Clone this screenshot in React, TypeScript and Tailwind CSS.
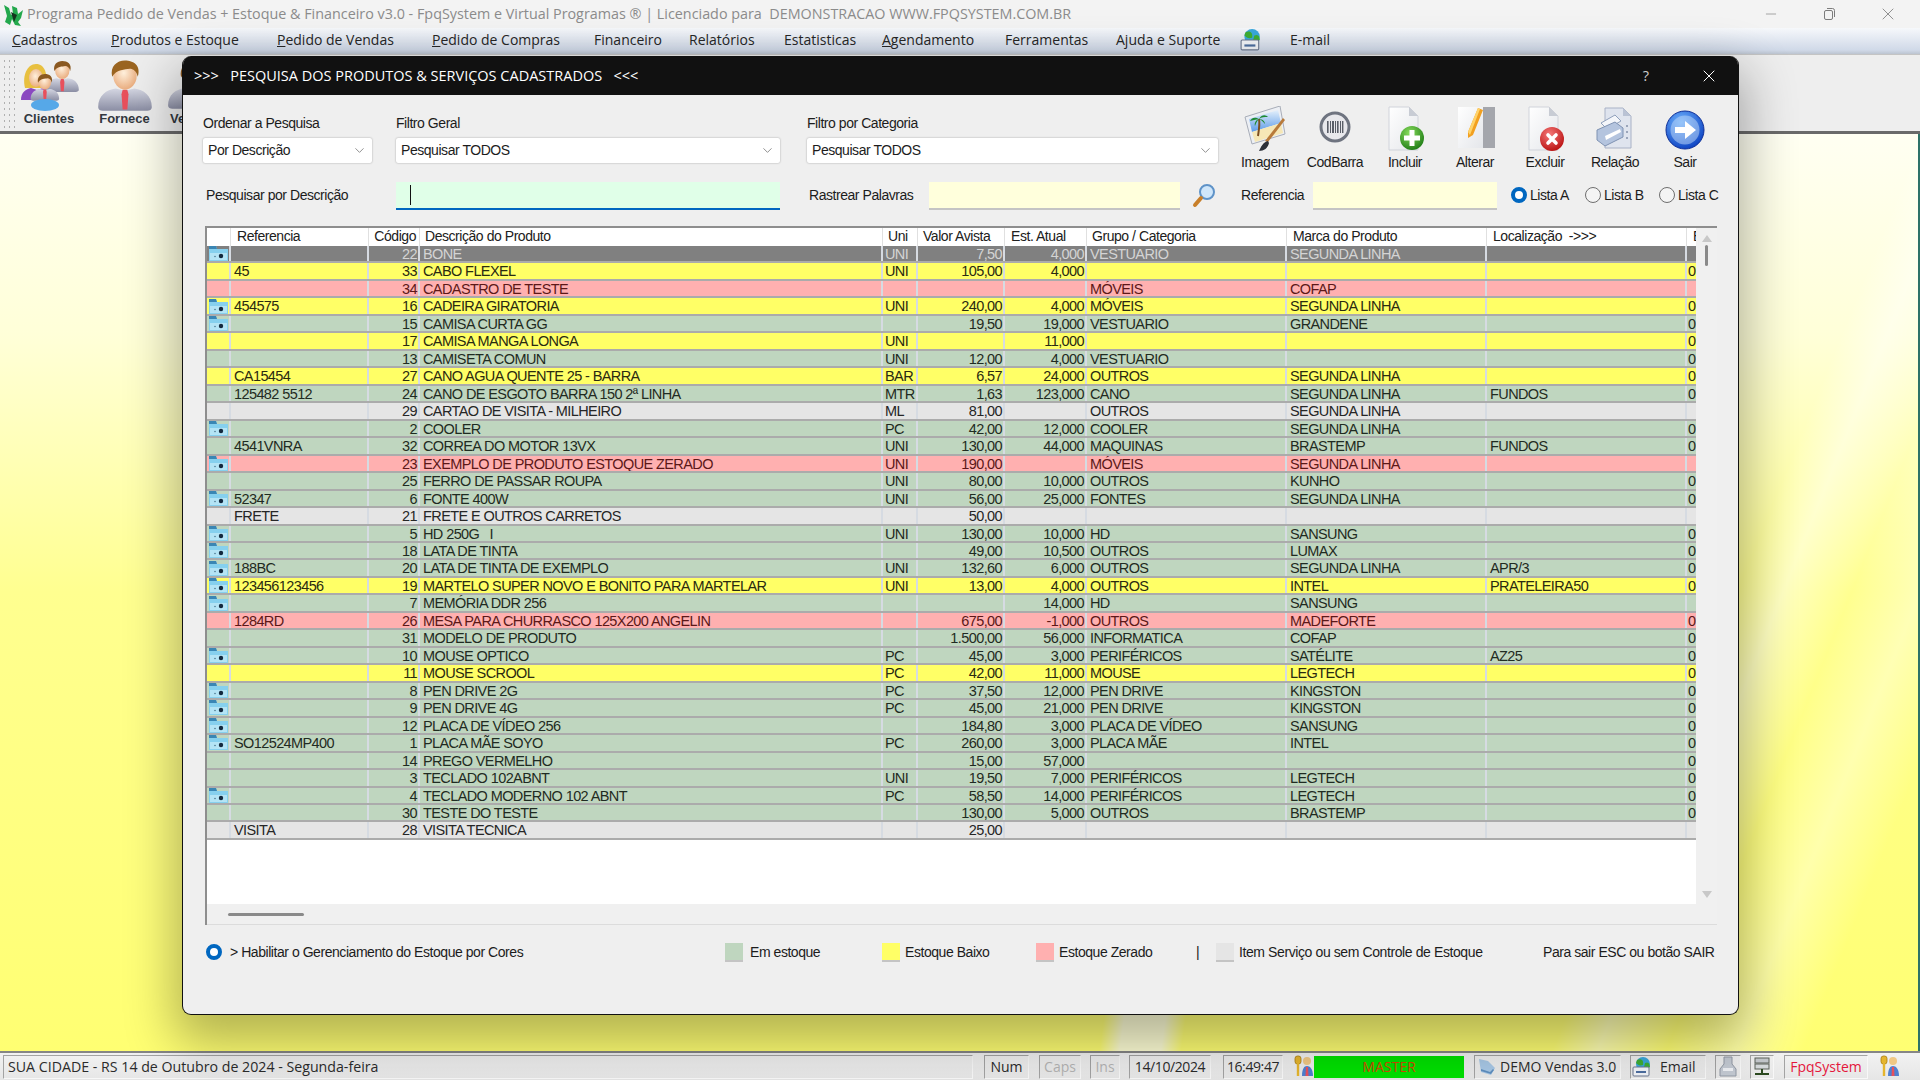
import React from "react";
import { ChevronDown, Minus, X } from "lucide-react";

const MENU = [
  { u: "C", t: "adastros", w: "w-[99px]" },
  { u: "P", t: "rodutos e Estoque", w: "w-[166px]" },
  { u: "P", t: "edido de Vendas", w: "w-[155px]" },
  { u: "P", t: "edido de Compras", w: "w-[162px]" },
  { u: "", t: "Financeiro", w: "w-[95px]" },
  { u: "", t: "Relatórios", w: "w-[95px]" },
  { u: "", t: "Estatisticas", w: "w-[98px]" },
  { u: "A", t: "gendamento", w: "w-[123px]" },
  { u: "", t: "Ferramentas", w: "w-[111px]" },
  { u: "", t: "Ajuda e Suporte", w: "w-[124px]" },
];

const GRID =
  "grid grid-cols-[24px_138px_51px_463px_35px_87px_82px_200px_200px_200px_9px]";

const KINDS: Record<string, string> = {
  s: "bg-[#808080] text-[#d4d4d4]",
  y: "bg-[#ffff66] text-[#2a2a10]",
  r: "bg-[#ffb0b0] text-[#5c1818]",
  g: "bg-[#bfd6bf] text-[#1f2b22]",
  n: "bg-[#e5e5e5] text-[#262626]",
};

// kind|foto|referencia|codigo|descricao|uni|valor|estoque|grupo|marca|local|e
const ROWS = [
  "s|1||22|BONE|UNI|7,50|4,000|VESTUARIO|SEGUNDA LINHA||",
  "y|0|45|33|CABO FLEXEL|UNI|105,00|4,000||||0",
  "r|0||34|CADASTRO DE TESTE||||MÓVEIS|COFAP||",
  "y|1|454575|16|CADEIRA GIRATORIA|UNI|240,00|4,000|MÓVEIS|SEGUNDA LINHA||0",
  "g|1||15|CAMISA CURTA GG||19,50|19,000|VESTUARIO|GRANDENE||0",
  "y|0||17|CAMISA MANGA LONGA|UNI||11,000||||0",
  "g|0||13|CAMISETA COMUN|UNI|12,00|4,000|VESTUARIO|||0",
  "y|0|CA15454|27|CANO AGUA QUENTE 25 - BARRA|BAR|6,57|24,000|OUTROS|SEGUNDA LINHA||0",
  "g|0|125482 5512|24|CANO DE ESGOTO BARRA 150 2ª LINHA|MTR|1,63|123,000|CANO|SEGUNDA LINHA|FUNDOS|0",
  "n|0||29|CARTAO DE VISITA - MILHEIRO|ML|81,00||OUTROS|SEGUNDA LINHA||",
  "g|1||2|COOLER|PC|42,00|12,000|COOLER|SEGUNDA LINHA||0",
  "g|0|4541VNRA|32|CORREA DO MOTOR 13VX|UNI|130,00|44,000|MAQUINAS|BRASTEMP|FUNDOS|0",
  "r|1||23|EXEMPLO DE PRODUTO ESTOQUE ZERADO|UNI|190,00||MÓVEIS|SEGUNDA LINHA||",
  "g|0||25|FERRO DE PASSAR ROUPA|UNI|80,00|10,000|OUTROS|KUNHO||0",
  "g|1|52347|6|FONTE 400W|UNI|56,00|25,000|FONTES|SEGUNDA LINHA||0",
  "n|0|FRETE|21|FRETE E OUTROS CARRETOS||50,00|||||",
  "g|1||5|HD 250G\u00a0\u00a0\u00a0I|UNI|130,00|10,000|HD|SANSUNG||0",
  "g|1||18|LATA DE TINTA||49,00|10,500|OUTROS|LUMAX||0",
  "g|1|188BC|20|LATA DE TINTA DE EXEMPLO|UNI|132,60|6,000|OUTROS|SEGUNDA LINHA|APR/3|0",
  "y|1|123456123456|19|MARTELO SUPER NOVO E BONITO PARA MARTELAR|UNI|13,00|4,000|OUTROS|INTEL|PRATELEIRA50|0",
  "g|1||7|MEMÓRIA DDR 256|||14,000|HD|SANSUNG||",
  "r|0|1284RD|26|MESA PARA CHURRASCO 125X200 ANGELIN||675,00|-1,000|OUTROS|MADEFORTE||0",
  "g|0||31|MODELO DE PRODUTO||1.500,00|56,000|INFORMATICA|COFAP||0",
  "g|1||10|MOUSE OPTICO|PC|45,00|3,000|PERIFÉRICOS|SATÉLITE|AZ25|0",
  "y|0||11|MOUSE SCROOL|PC|42,00|11,000|MOUSE|LEGTECH||0",
  "g|1||8|PEN DRIVE 2G|PC|37,50|12,000|PEN DRIVE|KINGSTON||0",
  "g|1||9|PEN DRIVE 4G|PC|45,00|21,000|PEN DRIVE|KINGSTON||0",
  "g|1||12|PLACA DE VÍDEO 256||184,80|3,000|PLACA DE VÍDEO|SANSUNG||0",
  "g|1|SO12524MP400|1|PLACA MÃE SOYO|PC|260,00|3,000|PLACA MÃE|INTEL||0",
  "g|0||14|PREGO VERMELHO||15,00|57,000||||0",
  "g|0||3|TECLADO 102ABNT|UNI|19,50|7,000|PERIFÉRICOS|LEGTECH||0",
  "g|1||4|TECLADO MODERNO 102 ABNT|PC|58,50|14,000|PERIFÉRICOS|LEGTECH||0",
  "g|0||30|TESTE DO TESTE||130,00|5,000|OUTROS|BRASTEMP||0",
  "n|0|VISITA|28|VISITA TECNICA||25,00|||||",
].map((r) => r.split("|"));

const Defs = () => (
  <svg className="absolute w-0 h-0">
    <defs>
      <radialGradient id="skin" cx="45%" cy="40%" r="65%">
        <stop offset="0" stopColor="#fff0dc" />
        <stop offset="1" stopColor="#e8a878" />
      </radialGradient>
      <linearGradient id="suit" x1="0" y1="0" x2="0" y2="1">
        <stop offset="0" stopColor="#d4d6e2" />
        <stop offset="1" stopColor="#8b8ea4" />
      </linearGradient>
      <radialGradient id="blueBall" cx="40%" cy="30%" r="75%">
        <stop offset="0" stopColor="#6fb5ff" />
        <stop offset="1" stopColor="#0a3fc0" />
      </radialGradient>
      <radialGradient id="greenBall" cx="40%" cy="30%" r="75%">
        <stop offset="0" stopColor="#8ade5e" />
        <stop offset="1" stopColor="#1c7a14" />
      </radialGradient>
      <radialGradient id="redBall" cx="40%" cy="30%" r="75%">
        <stop offset="0" stopColor="#f57878" />
        <stop offset="1" stopColor="#b80f0f" />
      </radialGradient>
      <linearGradient id="sheet" x1="0" y1="0" x2="1" y2="1">
        <stop offset="0" stopColor="#ffffff" />
        <stop offset="1" stopColor="#e4e6ea" />
      </linearGradient>
      <linearGradient id="sky" x1="0" y1="0" x2="0" y2="1">
        <stop offset="0" stopColor="#e4f0fb" />
        <stop offset="1" stopColor="#5d9be8" />
      </linearGradient>
    </defs>
  </svg>
);

const Person = ({ x = 0, y = 0, s = 1, hair = "#9a6420" }: { x?: number; y?: number; s?: number; hair?: string }) => (
  <g transform={`translate(${x} ${y}) scale(${s})`}>
    <path d="M1 40c0-10 7-15 15-16l8 2 8-2c8 1 15 6 15 16 0 2-2 3-4 3H5c-2 0-4-1-4-3z" fill="url(#suit)" />
    <path d="M22 25h4l1 4-1 13h-4l-1-13z" fill="#e8505c" />
    <ellipse cx="24" cy="13" rx="10" ry="12" fill="url(#skin)" />
    <path d="M13 14C11 5 17 0 24 0s14 4 11 14c-1-5-4-7-7-7-4 1-11 0-15 7z" fill={hair} />
  </g>
);

const CameraIcon = () => (
  <svg width="19" height="15" viewBox="0 0 19 15" className="shrink-0">
    <path d="M0 0h7l1 3h11v12H0z" fill="#86d0ee" />
    <path d="M0 0h7l1 3H0z" fill="#3a86b4" />
    <rect x="1" y="7" width="17" height="7" fill="#b4e4f5" />
    <circle cx="12" cy="10" r="2.200" fill="#14293e" />
    <circle cx="6" cy="10.500" r="0.800" fill="#4d7890" />
  </svg>
);

const ImagemIcon = () => (
  <svg width="44" height="46" viewBox="0 0 44 46">
    <path d="M2 11 37 0l5 28-33 10z" fill="#eceff4" stroke="#a8adb8" />
    <path d="M6 13 35 4l3 13L9 26z" fill="url(#sky)" />
    <path d="M9 26l29-9 2 10-28 9z" fill="#f6e7b6" />
    <path d="M15 30c1-7 2-12 1-17" stroke="#7a4d20" strokeWidth="2" fill="none" />
    <path d="M16 13c-5-3-8 0-9 2 3-1 5-1 9-2zm0 0c3-5 7-4 9-2-4 0-6 0-9 2zm0 0c-3 1-5 4-4 7 1-3 2-5 4-7zm0 0c4 0 6 3 6 5-2-2-3-4-6-5z" fill="#1e8a34" />
    <path d="M42 14 25 36l-3-1 18-23z" fill="#b87a3a" />
    <path d="M25 35c-5 1-7 6-9 10 5 0 9-3 10-8z" fill="#2c3038" />
  </svg>
);

const CodBarraIcon = () => (
  <svg width="44" height="46" viewBox="0 0 44 46">
    <circle cx="22" cy="21" r="14" fill="#e8e8ec" stroke="#6f7480" strokeWidth="3" />
    <g fill="#5a5e68">
      <rect x="14" y="15" width="1.600" height="12" />
      <rect x="17" y="15" width="1" height="12" />
      <rect x="19" y="15" width="2" height="12" />
      <rect x="22" y="15" width="1" height="12" />
      <rect x="24" y="15" width="1.600" height="12" />
      <rect x="27" y="15" width="1" height="12" />
      <rect x="29" y="15" width="1.400" height="12" />
    </g>
  </svg>
);

const Doc = () => (
  <path d="M6 2h20l9 9v34H6z" fill="url(#sheet)" stroke="#d0d3da" />
);

const IncluirIcon = () => (
  <svg width="44" height="48" viewBox="0 0 44 48">
    <Doc />
    <path d="M26 2v9h9z" fill="#c8ccd4" />
    <circle cx="29" cy="33" r="12" fill="url(#greenBall)" />
    <path d="M26.500 25h5v5.500H37v5h-5.500V41h-5v-5.500H21v-5h5.500z" fill="#fff" />
  </svg>
);

const AlterarIcon = () => (
  <svg width="44" height="48" viewBox="0 0 44 48">
    <rect x="8" y="2" width="34" height="41" fill="#a4a6ac" />
    <path d="M5 2h25v41H5z" fill="url(#sheet)" />
    <path d="M25 3l5 2-10 25-5 3 0-6z" fill="#f2a020" />
    <path d="M25 3l2 1-10 26-2-3z" fill="#ffd36a" />
  </svg>
);

const ExcluirIcon = () => (
  <svg width="44" height="48" viewBox="0 0 44 48">
    <Doc />
    <path d="M26 2v9h9z" fill="#c8ccd4" />
    <circle cx="29" cy="34" r="12" fill="url(#redBall)" />
    <path d="M25 30l8 8m0-8-8 8" stroke="#fff" strokeWidth="3.600" strokeLinecap="round" />
  </svg>
);

const RelacaoIcon = () => (
  <svg width="44" height="48" viewBox="0 0 44 48">
    <path d="M12 3h18l8 8v32H12z" fill="#dfe4ee" stroke="#a9b2c6" />
    <path d="M30 3v8h8z" fill="#b9c2d4" />
    <path d="M8 18l14-8 6 6-14 8z" fill="#f4f6fa" stroke="#8fa0bc" />
    <path d="M4 25l18-8 8 6v9L12 41l-8-6z" fill="#b4c4de" stroke="#7f92b2" />
    <path d="M12 31l15-7 1 3-15 8z" fill="#ffffff" />
    <g fill="#9aa5ba">
      <rect x="33" y="20" width="2" height="2" />
      <rect x="33" y="26" width="2" height="2" />
      <rect x="33" y="32" width="2" height="2" />
    </g>
  </svg>
);

const SairIcon = () => (
  <svg width="44" height="46" viewBox="0 0 44 46">
    <circle cx="22" cy="24" r="19" fill="url(#blueBall)" stroke="#0e2f98" />
    <circle cx="22" cy="24" r="14.500" fill="#b6d2f6" opacity="0.55" />
    <path d="M12 21h10v-6l11 9-11 9v-6H12z" fill="#fff" />
  </svg>
);

const MiniKeys = () => (
  <svg width="20" height="23" viewBox="0 0 20 23">
    <rect x="1" y="1" width="6" height="8" rx="2.500" fill="#e5b52e" stroke="#a87c10" strokeWidth="0.800" />
    <rect x="2.800" y="8" width="2.400" height="13" fill="#e5b52e" />
    <circle cx="13" cy="6" r="4" fill="#f0c884" />
    <path d="M8 21c0-7 2-10 5-10s6 3 6 10z" fill="#4f7fd0" />
    <path d="M12 12h2l.5 9h-3z" fill="#e8505c" />
  </svg>
);

const GlobeSave = ({ size = 20 }: { size?: number }) => (
  <svg width={size} height={size} viewBox="0 0 20 20">
    <circle cx="11" cy="7" r="7" fill="#3aa8dc" />
    <path d="M5 3c4-2 7 0 6 5-3 1-5 0-7-2zM13 6c4-2 5 2 5 4l-4 3-2-3z" fill="#3fae34" />
    <rect x="1" y="10" width="16" height="9" rx="1" fill="#f2f4f8" stroke="#6c7890" />
    <rect x="4" y="14" width="10" height="2" fill="#4d6ea0" />
  </svg>
);

const Panel = ({ className, children }: { className: string; children?: React.ReactNode }) => (
  <div
    className={`h-[24px] flex items-center shrink-0 border border-t-[#a3a3a3] border-l-[#a3a3a3] border-r-[#f8f8f8] border-b-[#f8f8f8] whitespace-nowrap overflow-hidden ${className}`}
  >
    {children}
  </div>
);

const SelectBox = ({ value, className }: { value: string; className: string }) => (
  <div
    className={`h-[25px] bg-white rounded-[2px] shadow-[0_0_2px_rgba(0,0,0,0.35)] flex items-center justify-between pl-[5px] pr-[5px] ${className}`}
  >
    <span>{value}</span>
    <ChevronDown size={15} strokeWidth={1.3} className="text-[#777]" />
  </div>
);

const Radio = ({ on, label, className }: { on?: boolean; label: string; className: string }) => (
  <div className={`flex items-center gap-[3px] pb-[2px] ${className}`}>
    {on ? (
      <span className="w-[16px] h-[16px] rounded-full border-[4px] border-[#0067c0] bg-white shrink-0" />
    ) : (
      <span className="w-[16px] h-[16px] rounded-full border border-[#6e6e6e] bg-[#f4f4f4] shrink-0" />
    )}
    <span>{label}</span>
  </div>
);

const Tool = ({ label, children }: { label: string; children: React.ReactNode }) => (
  <div className="w-[70px] flex flex-col items-center">
    <div className="h-[50px] shrink-0 flex items-center justify-center">{children}</div>
    <span className="h-[16px] leading-[16px] shrink-0">{label}</span>
  </div>
);

const Swatch = ({ className }: { className: string }) => (
  <span className={`w-[18px] h-[19px] border-b-2 border-[#c4c4c4] shrink-0 ${className}`} />
);

export default function App() {
  return (
    <div className="relative w-screen h-screen overflow-hidden flex flex-col font-['Liberation_Sans',sans-serif] text-[#1c1c1c] bg-[#f0f0f0]">
      <Defs />

      {/* barra de titulo */}
      <div className="h-[28px] shrink-0 bg-[#f3f3f3] flex items-center pl-[2px] font-['Open_Sans',sans-serif] text-[#8b8b8b] text-[14.35px]">
        <svg width="22" height="24" viewBox="0 0 22 24" className="shrink-0">
          <path d="M2 3l5 3 2 7 2-1-1-8 5 2 1 6 5-4-2 8-3 4 3 4-6-1-3-6-2 6-5-3 2-6z" fill="#23a84c" />
          <path d="M9 10l6 3-3 7z" fill="#14331e" />
        </svg>
        <span className="ml-[3px] whitespace-pre">Programa Pedido de Vendas + Estoque &amp; Financeiro v3.0 - FpqSystem e Virtual Programas ® | Licenciado para  DEMONSTRACAO WWW.FPQSYSTEM.COM.BR</span>
        <div className="ml-auto mr-[2px] flex items-center text-[#7c7c7c]">
          <span className="w-[58px] flex justify-center"><Minus size={16} strokeWidth={1} /></span>
          <span className="w-[58px] flex justify-center">
            <svg width="13" height="14" viewBox="0 0 13 14" fill="none" stroke="currentColor"><rect x="1.500" y="3.500" width="8" height="9" rx="1.500" /><path d="M4 1.500h5.500a2 2 0 0 1 2 2V10" /></svg>
          </span>
          <span className="w-[60px] flex justify-center"><X size={20} strokeWidth={1} /></span>
        </div>
      </div>

      {/* menu */}
      <div className="h-[26px] shrink-0 flex items-center pl-[12px] pb-[3px] text-[14px] text-[#262626] font-['Open_Sans',sans-serif] bg-[linear-gradient(180deg,#f6f8fb,#d0d9e8_85%,#bcc4d0)]">
        {MENU.map((m, i) => (
          <span key={i} className={`${m.w} shrink-0 whitespace-nowrap`}>
            <span className="underline">{m.u}</span>
            {m.t}
          </span>
        ))}
        <GlobeSave size={22} />
        <span className="ml-[28px]">E-mail</span>
      </div>

      {/* barra de ferramentas */}
      <div className="h-[80px] shrink-0 border-t border-[#c4c4c4] border-b-[3px] border-b-[#6a6a6a] bg-[#eeeeee] flex text-[#33383f]">
        <div className="w-[14px] ml-[2px] my-[3px] bg-[radial-gradient(#b0b0b0_1px,transparent_1px)] bg-[length:5px_6px]" />
        <div className="w-[66px] flex flex-col items-center pt-[3px]">
          <svg width="62" height="54" viewBox="0 0 62 54">
            <path d="M7 30c-3-12 2-24 11-24s12 10 10 24z" fill="#e8c040" />
            <path d="M3 42c0-8 5-11 10-12l6 2 6-2c5 1 9 4 9 12z" fill="#8a48c0" />
            <ellipse cx="18" cy="20" rx="7" ry="9" fill="url(#skin)" />
            <Person x={27} y={3} s={0.72} hair="#8a5820" />
            <Person x={12} y={16} s={0.62} hair="#8a5820" />
            <ellipse cx="27" cy="47" rx="14" ry="6" fill="#56a8e8" />
          </svg>
          <span className="font-bold text-[13px] leading-[14px]">Clientes</span>
        </div>
        <div className="w-[85px] flex flex-col items-center pt-[3px]">
          <svg width="56" height="54" viewBox="0 0 48 46">
            <Person x={0} y={2} hair="#9a6420" />
          </svg>
          <span className="font-bold text-[13px] leading-[14px]">Fornece</span>
        </div>
        <div className="w-[52px] flex flex-col items-start pt-[3px]">
          <svg width="52" height="54" viewBox="0 0 48 46">
            <Person x={0} y={2} hair="#8a5820" />
          </svg>
          <span className="font-bold text-[13px] leading-[14px] ml-[3px]">Ve</span>
        </div>
      </div>

      {/* area de trabalho */}
      <div className="flex-1 border-r-[2px] border-[#2e7268] bg-[linear-gradient(112deg,transparent_84%,rgba(255,255,255,0.45)_86%,transparent_89%,rgba(255,255,255,0.35)_92%,transparent_95%),linear-gradient(98deg,transparent_60%,rgba(255,255,255,0.7)_61%,rgba(255,255,255,0.7)_63%,transparent_64%),linear-gradient(180deg,#fffff2_0%,#ffffd8_22%,#ffff90_50%,#ffff72_100%)]" />

      {/* status */}
      <div className="h-[29px] shrink-0 border-t-2 border-[#868686] bg-[linear-gradient(180deg,#f2f2f2,#e6e6e6)] flex items-center text-[#2b2b2b] text-[14px] font-['Open_Sans',sans-serif] pl-[3px]">
        <Panel className="w-[970px] pl-[4px] text-[14.2px]">SUA CIDADE - RS 14 de Outubro de 2024 - Segunda-feira</Panel>
        <Panel className="w-[45px] ml-[11px] justify-center">Num</Panel>
        <Panel className="w-[42px] ml-[10px] justify-center text-[#b4b4b4]">Caps</Panel>
        <Panel className="w-[30px] ml-[9px] justify-center text-[#b4b4b4]">Ins</Panel>
        <Panel className="w-[82px] ml-[9px] justify-center tracking-[-0.4px]">14/10/2024</Panel>
        <Panel className="w-[60px] ml-[12px] justify-center tracking-[-0.4px]">16:49:47</Panel>
        <div className="w-[31px] h-[24px] flex items-center justify-end shrink-0"><MiniKeys /></div>
        <div className="w-[150px] h-[22px] bg-[#00e000] flex items-center justify-center text-[#d04a00] shrink-0">MASTER</div>
        <Panel className="w-[147px] ml-[10px] pl-[2px]">
          <svg width="20" height="20" viewBox="0 0 20 20" className="shrink-0 mr-[3px]">
            <path d="M2 2l9 2 7 7-4 7-10-3z" fill="#a8c8e6" />
            <path d="M4 14l10 3 3-4-1-1-3 3-9-3z" fill="#5f8fc0" />
          </svg>
          DEMO Vendas 3.0
        </Panel>
        <Panel className="w-[76px] ml-[9px] pl-[1px]">
          <GlobeSave size={20} />
          <span className="ml-[8px]">Email</span>
        </Panel>
        <Panel className="w-[26px] ml-[9px] justify-center">
          <svg width="18" height="22" viewBox="0 0 18 22">
            <path d="M5 1h8v7l4 5v7H1v-7l4-5z" fill="#c3c9d2" stroke="#9198a4" />
            <rect x="4" y="12" width="10" height="3" fill="#eef0f4" />
          </svg>
        </Panel>
        <Panel className="w-[24px] ml-[9px] justify-center">
          <svg width="18" height="20" viewBox="0 0 18 20">
            <rect x="2" y="1" width="14" height="5" fill="#c4c8cc" stroke="#5a6058" />
            <rect x="2" y="7" width="14" height="5" fill="#d6dadc" stroke="#5a6058" />
            <path d="M9 12v4M2 17h14" stroke="#2c4a20" strokeWidth="2" />
          </svg>
        </Panel>
        <Panel className="w-[84px] ml-[10px] justify-center text-[#e4173c]">FpqSystem</Panel>
        <div className="w-[24px] ml-[10px] flex justify-center"><MiniKeys /></div>
      </div>

      {/* janela de pesquisa */}
      <div className="absolute left-[182px] top-[56px] w-[1557px] h-[959px] rounded-[9px] border-x border-b border-[#111] bg-[#efefef] shadow-[0_20px_50px_8px_rgba(0,0,0,0.3)] overflow-hidden flex flex-col text-[14px] tracking-[-0.45px]">
        <div className="h-[39px] shrink-0 bg-[#111111] text-white flex items-center pl-[11px] font-['Open_Sans',sans-serif] text-[14.5px] tracking-normal whitespace-pre">
          <span>{">>>   PESQUISA DOS PRODUTOS & SERVIÇOS CADASTRADOS   <<<"}</span>
          <span className="ml-auto mr-[50px] text-[#cfcfcf]">?</span>
          <X size={20} strokeWidth={1.2} className="mr-[19px]" />
        </div>

        <div className="flex pl-[20px] pt-[9px] h-[87px] shrink-0">
          <div className="w-[169px] pt-[9px]">
            <div className="h-[25px]">Ordenar a Pesquisa</div>
            <SelectBox value="Por Descrição" className="w-full" />
          </div>
          <div className="w-[384px] ml-[24px] pt-[9px]">
            <div className="h-[25px]">Filtro Geral</div>
            <SelectBox value="Pesquisar TODOS" className="w-full" />
          </div>
          <div className="w-[411px] ml-[27px] pt-[9px]">
            <div className="h-[25px]">Filtro por Categoria</div>
            <SelectBox value="Pesquisar TODOS" className="w-full" />
          </div>
          <div className="flex ml-[12px]">
            <Tool label="Imagem"><ImagemIcon /></Tool>
            <Tool label="CodBarra"><CodBarraIcon /></Tool>
            <Tool label="Incluir"><IncluirIcon /></Tool>
            <Tool label="Alterar"><AlterarIcon /></Tool>
            <Tool label="Excluir"><ExcluirIcon /></Tool>
            <Tool label="Relação"><RelacaoIcon /></Tool>
            <Tool label="Sair"><SairIcon /></Tool>
          </div>
        </div>

        <div className="flex items-center h-[28px] shrink-0 pl-[23px]">
          <span className="w-[190px] shrink-0 pb-[2px]">Pesquisar por Descrição</span>
          <div className="w-[384px] h-[28px] bg-[#e0ffe8] border-b-[2px] border-[#0067c0] flex items-center pl-[14px]">
            <span className="w-px h-[20px] bg-[#111]" />
          </div>
          <span className="w-[120px] ml-[29px] shrink-0 pb-[2px]">Rastrear Palavras</span>
          <div className="w-[251px] h-[28px] bg-[#ffffdc] border-b-2 border-[#c4c4c4]" />
          <svg width="24" height="26" viewBox="0 0 24 26" className="ml-[12px] shrink-0">
            <circle cx="15" cy="9" r="7" fill="#cfe6fa" stroke="#5f93c8" strokeWidth="2" />
            <path d="M9 15l-6 7" stroke="#c87f2a" strokeWidth="4" strokeLinecap="round" />
          </svg>
          <span className="w-[72px] ml-[25px] shrink-0 pb-[2px]">Referencia</span>
          <div className="w-[184px] h-[28px] bg-[#ffffdc] border-b-2 border-[#c4c4c4]" />
          <Radio on label="Lista A" className="ml-[14px] w-[74px]" />
          <Radio label="Lista B" className="w-[74px]" />
          <Radio label="Lista C" className="w-[66px]" />
        </div>

        {/* tabela */}
        <div className="w-[1512px] h-[699px] mt-[16px] ml-[22px] shrink-0 border-t-2 border-l-2 border-[#8e8e8e] flex flex-col bg-[#f0f0f0] relative">
          <div className="flex-1 flex min-h-0">
            <div className="w-[1489px] bg-white overflow-hidden">
              <div className={`${GRID} h-[18px] bg-white text-[#202020] whitespace-nowrap leading-[17px]`}>
                <div className="border-r border-[#e0e0e0]" />
                <div className="border-r border-[#e0e0e0] pl-[6px] overflow-hidden">Referencia</div>
                <div className="border-r border-[#e0e0e0] text-right pr-[3px] overflow-hidden">Código</div>
                <div className="border-r border-[#e0e0e0] pl-[5px] overflow-hidden">Descrição do Produto</div>
                <div className="border-r border-[#e0e0e0] pl-[5px] overflow-hidden">Uni</div>
                <div className="border-r border-[#e0e0e0] pl-[5px] overflow-hidden">Valor Avista</div>
                <div className="border-r border-[#e0e0e0] pl-[6px] overflow-hidden">Est. Atual</div>
                <div className="border-r border-[#e0e0e0] pl-[5px] overflow-hidden">Grupo / Categoria</div>
                <div className="border-r border-[#e0e0e0] pl-[6px] overflow-hidden">Marca do Produto</div>
                <div className="border-r border-[#e0e0e0] pl-[6px] overflow-hidden whitespace-pre">Localização  -&gt;&gt;&gt;</div>
                <div className="pl-[6px] overflow-hidden">E</div>
              </div>
              {ROWS.map((r, i) => (
                <div
                  key={i}
                  className={`${GRID} h-[17.47px] text-[14.5px] tracking-[-0.6px] leading-[16px] whitespace-nowrap border-b-2 border-[#ababab] ${KINDS[r[0]]}`}
                >
                  <div className="border-r-2 border-[#d6dbe2] flex items-center justify-center overflow-hidden">
                    {r[1] === "1" && <CameraIcon />}
                  </div>
                  <div className="border-r-2 border-[#d6dbe2] pl-[3px] overflow-hidden">{r[2]}</div>
                  <div className="border-r-2 border-[#d6dbe2] text-right pr-[1px] overflow-hidden">{r[3]}</div>
                  <div className="border-r-2 border-[#d6dbe2] pl-[3px] overflow-hidden">{r[4]}</div>
                  <div className="border-r-2 border-[#d6dbe2] pl-[2px] overflow-hidden">{r[5]}</div>
                  <div className="border-r-2 border-[#d6dbe2] text-right pr-[1px] overflow-hidden">{r[6]}</div>
                  <div className="border-r-2 border-[#d6dbe2] text-right pr-[1px] overflow-hidden">{r[7]}</div>
                  <div className="border-r-2 border-[#d6dbe2] pl-[3px] overflow-hidden">{r[8]}</div>
                  <div className="border-r-2 border-[#d6dbe2] pl-[3px] overflow-hidden">{r[9]}</div>
                  <div className="border-r-2 border-[#d6dbe2] pl-[3px] overflow-hidden">{r[10]}</div>
                  <div className="pl-[1px] overflow-hidden">{r[11]}</div>
                </div>
              ))}
            </div>
            <div className="w-[21px] flex flex-col items-center pt-[7px] pb-[6px]">
              <span className="w-0 h-0 border-x-[5px] border-x-transparent border-b-[7px] border-b-[#c8c8c8]" />
              <span className="w-[3px] h-[21px] mt-[3px] rounded-full bg-[#8a8a8a]" />
              <span className="mt-auto w-0 h-0 border-x-[5px] border-x-transparent border-t-[7px] border-t-[#c8c8c8]" />
            </div>
          </div>
          <div className="h-[21px] shrink-0 flex items-center pl-[21px] border-b border-[#dcdcdc]">
            <span className="w-[76px] h-[3px] rounded-full bg-[#8a8a8a]" />
          </div>
        </div>

        {/* legenda */}
        <div className="flex items-center h-[28px] mt-[13px] shrink-0 pl-[23px]">
          <span className="w-[16px] h-[16px] rounded-full border-[4px] border-[#0067c0] bg-white shrink-0" />
          <span className="ml-[8px] w-[495px] shrink-0">&gt; Habilitar o Gerenciamento do Estoque por Cores</span>
          <Swatch className="bg-[#bfd6bf]" />
          <span className="ml-[7px] w-[132px] shrink-0">Em estoque</span>
          <Swatch className="bg-[#ffff66]" />
          <span className="ml-[5px] w-[131px] shrink-0">Estoque Baixo</span>
          <Swatch className="bg-[#ffb0b0]" />
          <span className="ml-[5px] w-[137px] shrink-0">Estoque Zerado</span>
          <span className="w-[20px] shrink-0">|</span>
          <Swatch className="bg-[#e5e5e5]" />
          <span className="ml-[5px] w-[304px] shrink-0 tracking-[-0.4px]">Item Serviço ou sem Controle de Estoque</span>
          <span className="shrink-0">Para sair ESC ou botão SAIR</span>
        </div>
      </div>
    </div>
  );
}
